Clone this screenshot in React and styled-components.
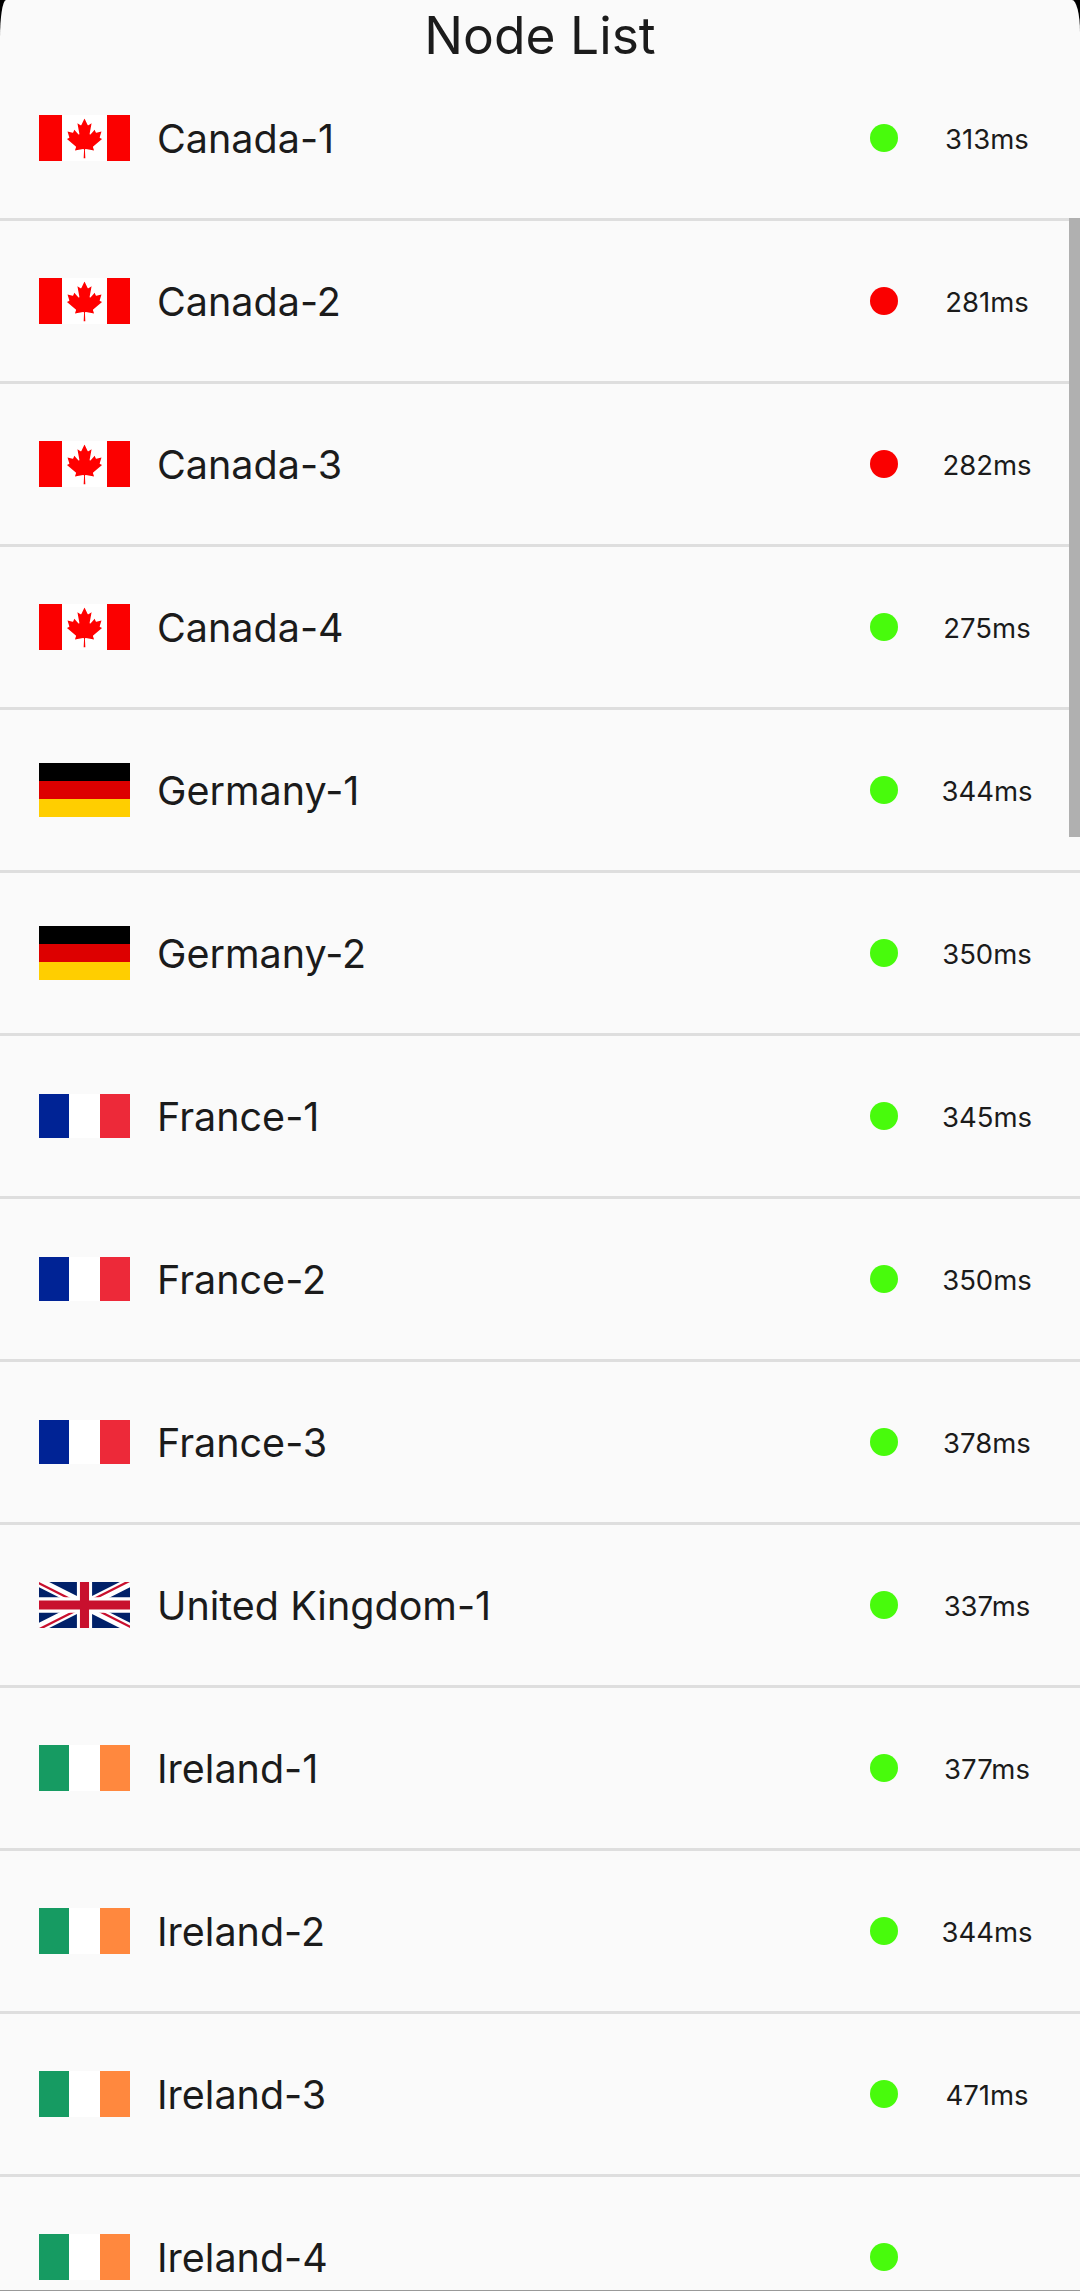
import React from "react";
import styled, { createGlobalStyle } from "styled-components";

const Global = createGlobalStyle`
  html, body { margin: 0; padding: 0; background: #000; }
  body { font-family: Inter, "Noto Sans", sans-serif; }
`;

const Panel = styled.main`
  position: relative;
  width: 1080px;
  height: 2291px;
  overflow: hidden;
  background: #fafafa;
  border-radius: 6px 8px 0 0 / 38px 32px 0 0;
  border-bottom: 1px solid #999;
  box-sizing: border-box;
  color: #1b1b1b;
`;

const Title = styled.h1`
  margin: 0;
  height: 58px;
  padding-top: 3px;
  box-sizing: border-box;
  text-align: center;
  font-size: 51.5px;
  line-height: 64px;
  font-weight: 400;
  white-space: nowrap;
`;

const List = styled.ul`
  margin: 0;
  padding: 0;
  list-style: none;
`;

const Row = styled.li`
  display: flex;
  align-items: center;
  height: 163px;
  box-sizing: border-box;
  padding: 0 43px 0 39px;
  border-bottom: 3px solid #dedede;
`;

const FlagBox = styled.svg`
  display: block;
  flex: none;
  width: 91px;
  height: ${(p) => p.$h}px;
`;

const Name = styled.span`
  flex: 1;
  margin-left: 27px;
  padding-top: 2px;
  font-size: 39.5px;
  line-height: 48px;
  font-weight: 400;
`;

const Dot = styled.span`
  flex: none;
  width: 28px;
  height: 28px;
  border-radius: 50%;
  background: ${(p) => (p.$up ? "#48fb0c" : "#fa0000")};
`;

const Latency = styled.span`
  flex: none;
  width: 100px;
  margin-left: 39px;
  padding-top: 2px;
  text-align: center;
  font-size: 27.5px;
  line-height: 34px;
`;

const ScrollThumb = styled.div`
  position: absolute;
  top: 218px;
  right: 0;
  width: 11px;
  height: 619px;
  background: #b0b0b0;
`;

const MAPLE =
  "m-90 2030 45-863a95 95 0 0 0-111-98l-859 151 116-320a65 65 0 0 0-20-73l-941-762 212-99a65 65 0 0 0 34-79l-186-572 542 115a65 65 0 0 0 73-38l105-247 423 454a65 65 0 0 0 111-57l-204-1052 327 189a65 65 0 0 0 91-27l332-652 332 652a65 65 0 0 0 91 27l327-189-204 1052a65 65 0 0 0 111 57l423-454 105 247a65 65 0 0 0 73 38l542-115-186 572a65 65 0 0 0 34 79l212 99-941 762a65 65 0 0 0-20 73l116 320-859-151a95 95 0 0 0-111 98l45 863z";

const Canada = () => (
  <FlagBox $h={46} viewBox="0 0 91 46">
    <rect width="91" height="46" fill="#fff" />
    <rect width="23" height="46" fill="#fb0000" />
    <rect x="68" width="23" height="46" fill="#fb0000" />
    <svg x="26.5" y="3.5" width="38" height="40" viewBox="-2015 -2000 4030 4030" preserveAspectRatio="none">
      <path d={MAPLE} fill="#f00" />
    </svg>
  </FlagBox>
);

const Germany = () => (
  <FlagBox $h={54} viewBox="0 0 91 54">
    <rect width="91" height="18" fill="#000" />
    <rect y="18" width="91" height="18" fill="#dd0000" />
    <rect y="36" width="91" height="18" fill="#ffce00" />
  </FlagBox>
);

const Tricolor = ({ left, right, h }) => (
  <FlagBox $h={h} viewBox={`0 0 91 ${h}`}>
    <rect width="91" height={h} fill="#fff" />
    <rect width="30" height={h} fill={left} />
    <rect x="61" width="30" height={h} fill={right} />
  </FlagBox>
);

const UK = () => (
  <FlagBox $h={46} viewBox="0 0 60 30" preserveAspectRatio="none">
    <defs>
      <clipPath id="uk-t">
        <path d="M30,15 h30 v15 z v15 h-30 z h-30 v-15 z v-15 h30 z" />
      </clipPath>
    </defs>
    <rect width="60" height="30" fill="#012169" />
    <path d="M0,0 L60,30 M60,0 L0,30" stroke="#fff" strokeWidth="6" />
    <path d="M0,0 L60,30 M60,0 L0,30" stroke="#c8102e" strokeWidth="3" clipPath="url(#uk-t)" />
    <path d="M30,0 v30 M0,15 h60" stroke="#fff" strokeWidth="10" />
    <path d="M30,0 v30 M0,15 h60" stroke="#c8102e" strokeWidth="6" />
  </FlagBox>
);

const France = () => <Tricolor left="#002395" right="#ed2939" h={44} />;
const Ireland = () => <Tricolor left="#169b62" right="#ff883e" h={46} />;

const NODES = [
  [Canada, "Canada-1", true, "313ms"],
  [Canada, "Canada-2", false, "281ms"],
  [Canada, "Canada-3", false, "282ms"],
  [Canada, "Canada-4", true, "275ms"],
  [Germany, "Germany-1", true, "344ms"],
  [Germany, "Germany-2", true, "350ms"],
  [France, "France-1", true, "345ms"],
  [France, "France-2", true, "350ms"],
  [France, "France-3", true, "378ms"],
  [UK, "United Kingdom-1", true, "337ms"],
  [Ireland, "Ireland-1", true, "377ms"],
  [Ireland, "Ireland-2", true, "344ms"],
  [Ireland, "Ireland-3", true, "471ms"],
  [Ireland, "Ireland-4", true, ""],
];

export default function App() {
  return (
    <Panel>
      <Global />
      <Title>Node List</Title>
      <List>
        {NODES.map(([Flag, name, up, ms]) => (
          <Row key={name}>
            <Flag />
            <Name>{name}</Name>
            <Dot $up={up} />
            <Latency>{ms}</Latency>
          </Row>
        ))}
      </List>
      <ScrollThumb />
    </Panel>
  );
}
